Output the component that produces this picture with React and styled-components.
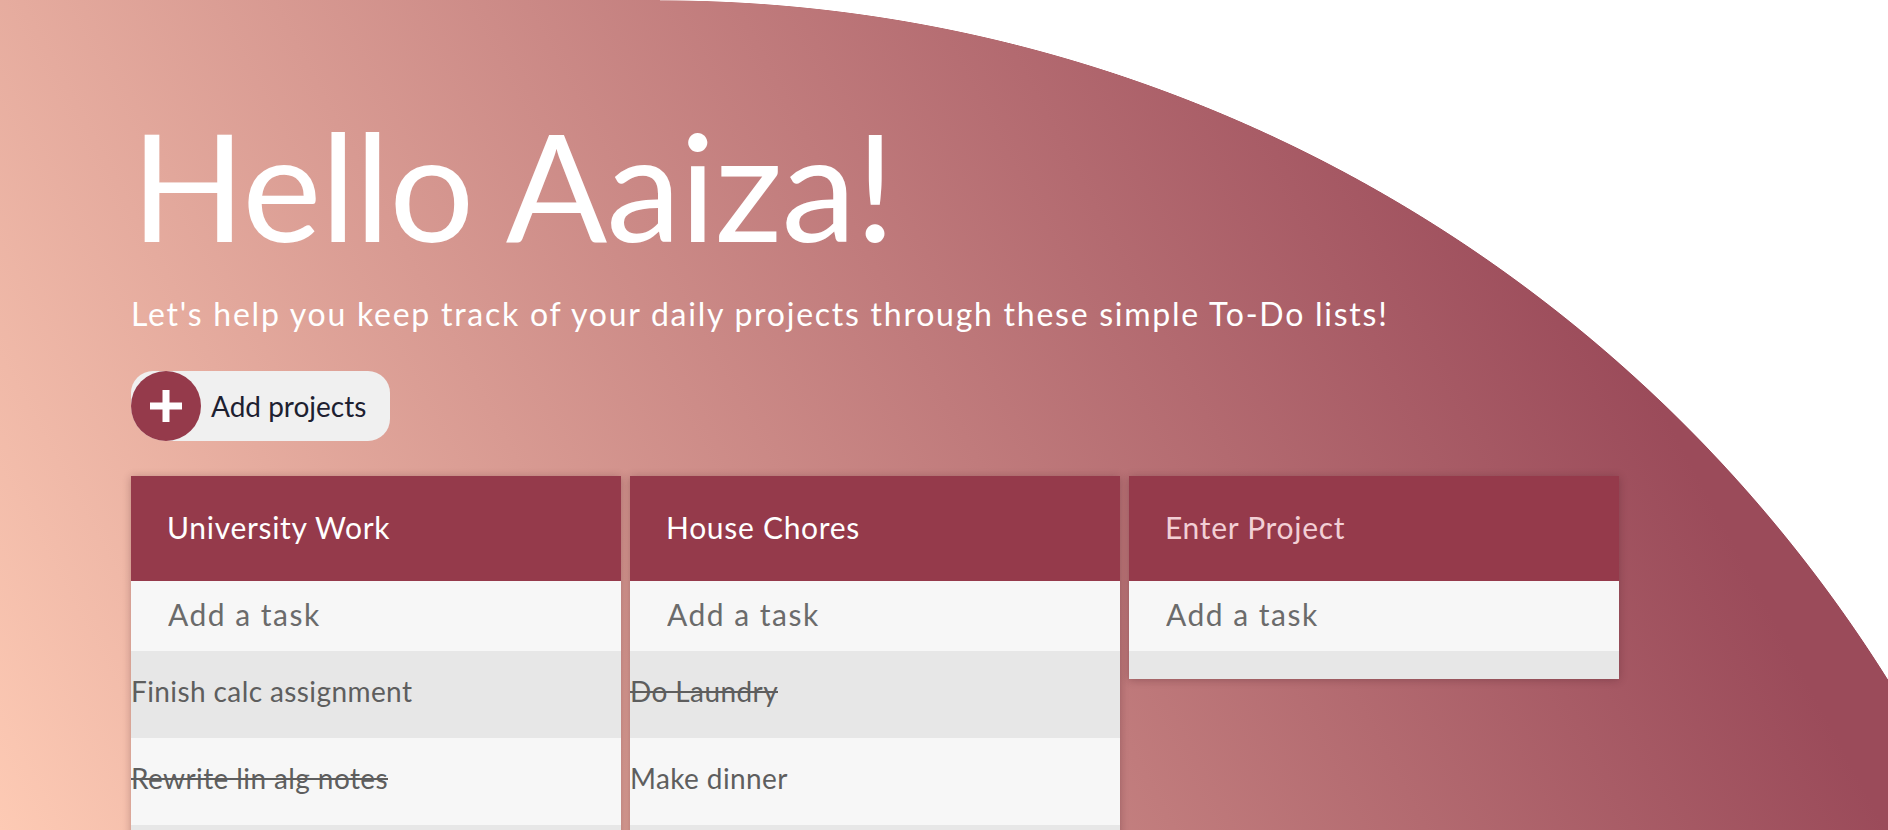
import React from "react";
import styled, { createGlobalStyle } from "styled-components";

const GlobalStyle = createGlobalStyle`
  body {
    margin: 0;
    font-family: Lato, "Open Sans", sans-serif;
  }
`;

const Page = styled.main`
  height: 100vh;
  box-sizing: border-box;
  padding: 109px 0 0 131px;
  background:
    radial-gradient(ellipse 1450px 1450px at 0 1450px, transparent 99.95%, #fff 100%) 660px 0 / 1700px 1700px no-repeat,
    linear-gradient(62deg, #fdcab4 0%, #9b4b5a 81%);
`;

const Title = styled.h1`
  margin: 0;
  font-size: 150px;
  line-height: 1;
  font-weight: 400;
  color: #fff;
  letter-spacing: -1px;
`;

const Subtitle = styled.p`
  margin: 36px 0 0;
  font-size: 32px;
  line-height: 1.2;
  letter-spacing: 1.75px;
  color: #fff;
`;

const AddButton = styled.button`
  margin-top: 38px;
  display: flex;
  align-items: center;
  height: 70px;
  padding: 0 24px 0 0;
  border: none;
  border-radius: 22px 22px 22px 35px;
  background: #f0f0f0;
  cursor: pointer;
  font-family: inherit;
`;

const PlusCircle = styled.span`
  width: 70px;
  height: 70px;
  border-radius: 50%;
  background: #953a4b;
  display: flex;
  align-items: center;
  justify-content: center;
`;

const ButtonLabel = styled.span`
  margin-left: 10px;
  font-size: 28px;
  color: #1d2030;
`;

const Board = styled.section`
  margin-top: 35px;
  display: flex;
  gap: 9px;
  align-items: flex-start;
`;

const Card = styled.div`
  width: 490px;
  box-shadow: 0 1px 8px rgba(60, 20, 30, 0.3);
`;

const CardHeader = styled.div`
  height: 105px;
  box-sizing: border-box;
  padding: 0 36px 4px;
  display: flex;
  align-items: center;
  background: #953a4b;
  color: #fff;
  font-size: 30px;
  letter-spacing: 0.7px;
`;

const HeaderInput = styled.input`
  width: 100%;
  border: none;
  outline: none;
  background: transparent;
  padding: 0;
  color: #fff;
  font: inherit;
  letter-spacing: inherit;
  &::placeholder {
    color: #f2cfd5;
  }
`;

const TaskInput = styled.input`
  display: block;
  width: 100%;
  height: 70px;
  box-sizing: border-box;
  padding: 0 37px 4px;
  border: none;
  outline: none;
  background: #f7f7f7;
  font-family: inherit;
  font-size: 30px;
  letter-spacing: 1.5px;
  color: #555;
  &::placeholder {
    color: #6b6b6b;
  }
`;

const TaskList = styled.ul`
  margin: 0;
  padding: 0 0 28px;
  list-style: none;
  background: #e7e7e7;
`;

const TaskItem = styled.li`
  height: 87px;
  box-sizing: border-box;
  padding-bottom: 8px;
  display: flex;
  align-items: center;
  font-size: 28px;
  letter-spacing: 0.4px;
  color: #5e5e5e;
  text-decoration: ${({ done }) => (done ? "line-through" : "none")};
  &:nth-child(even) {
    background: #f7f7f7;
  }
`;

const projects = [
  {
    name: "University Work",
    tasks: [
      { text: "Finish calc assignment", done: false },
      { text: "Rewrite lin alg notes", done: true },
    ],
  },
  {
    name: "House Chores",
    tasks: [
      { text: "Do Laundry", done: true },
      { text: "Make dinner", done: false },
    ],
  },
  { name: "", tasks: [] },
];

const Plus = () => (
  <svg width="34" height="34" viewBox="0 0 34 34">
    <path d="M17 1v32M1 17h32" stroke="#fff" strokeWidth="7" />
  </svg>
);

const App = () => {
  return (
    <>
      <GlobalStyle />
      <Page>
        <Title>Hello Aaiza!</Title>
        <Subtitle>
          Let's help you keep track of your daily projects through these simple To-Do lists!
        </Subtitle>
        <AddButton>
          <PlusCircle>
            <Plus />
          </PlusCircle>
          <ButtonLabel>Add projects</ButtonLabel>
        </AddButton>
        <Board>
          {projects.map((project, i) => (
            <Card key={i}>
              <CardHeader>
                {project.name ? (
                  project.name
                ) : (
                  <HeaderInput placeholder="Enter Project" />
                )}
              </CardHeader>
              <TaskInput placeholder="Add a task" />
              <TaskList>
                {project.tasks.map((task) => (
                  <TaskItem key={task.text} done={task.done}>
                    {task.text}
                  </TaskItem>
                ))}
              </TaskList>
            </Card>
          ))}
        </Board>
      </Page>
    </>
  );
};

export default App;
